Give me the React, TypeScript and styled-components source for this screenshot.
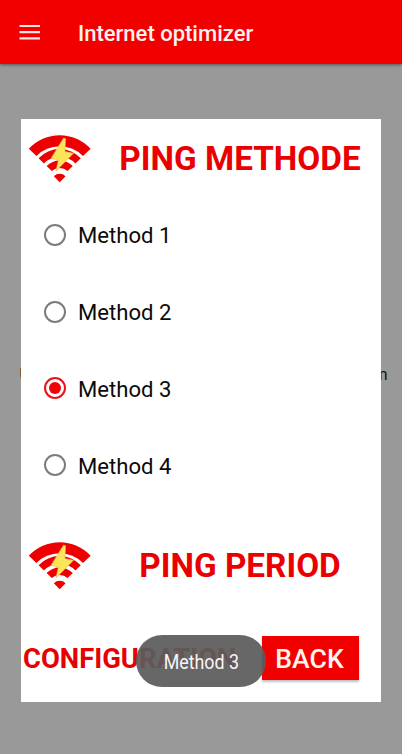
import React, { useState } from "react";
import styled, { createGlobalStyle } from "styled-components";

const GlobalStyle = createGlobalStyle`
  * { box-sizing: border-box; }
  body { margin: 0; font-family: Roboto, sans-serif; }
`;

const Screen = styled.div`
  position: relative;
  width: 402px;
  height: 754px;
  overflow: hidden;
  background: #999;
  display: flex;
  flex-direction: column;
`;

const AppBar = styled.header`
  height: 64px;
  flex: none;
  display: flex;
  align-items: center;
  gap: 37px;
  padding: 3px 0 0 19px;
  background: #f20000;
  box-shadow: 0 1px 3px rgba(0, 0, 0, 0.45);
`;

const MenuIcon = styled.svg`
  width: 22px;
  height: 16px;
  margin-top: -3px;
`;

const AppTitle = styled.h1`
  margin: 0;
  padding-top: 1px;
  color: #fff2ee;
  font-size: 22px;
  font-weight: 500;
  line-height: 28px;
  white-space: nowrap;
`;

const Content = styled.main`
  position: relative;
  flex: 1;
  padding: 55px 21px 0;
`;

const Behind = styled.div`
  position: absolute;
  top: 300px;
  left: 19.5px;
  right: 14.5px;
  display: flex;
  justify-content: space-between;
  color: #111;
  font-size: 16px;
  line-height: 21px;
`;

const Dialog = styled.section`
  position: relative;
  width: 360px;
  height: 583px;
  background: #fff;
  display: flex;
  flex-direction: column;
`;

const Heading = styled.div`
  display: flex;
  height: 78px;
  flex: none;
  padding: 15px 0 0 7px;
`;

const Logo = styled.svg`
  width: 63px;
  height: 49px;
  flex: none;
`;

const HeadingText = styled.h2`
  flex: 1;
  margin: 5px 0 0;
  padding-left: 8px;
  text-align: center;
  color: #ea0000;
  font-size: 33.3px;
  font-weight: 700;
  line-height: 40px;
  white-space: nowrap;
`;

const Options = styled.div`
  height: 329px;
  flex: none;
  display: flex;
  flex-direction: column;
`;

const Option = styled.button`
  display: flex;
  align-items: center;
  gap: 12px;
  height: 76.8px;
  padding: 0 0 0 23px;
  border: 0;
  background: none;
  font: 400 22.1px/30px Roboto, sans-serif;
  color: #0b0b0b;
  text-align: left;
`;

const Radio = styled.span<{ $checked: boolean }>`
  width: 22px;
  height: 22px;
  margin-top: -1px;
  border-radius: 50%;
  border: 2px solid ${(p) => (p.$checked ? "#ee1018" : "#7c7c7c")};
  display: grid;
  place-items: center;
  &::after {
    content: "";
    width: 12px;
    height: 12px;
    border-radius: 50%;
    background: ${(p) => (p.$checked ? "#f20006" : "transparent")};
  }
`;

const Footer = styled.footer`
  display: flex;
  align-items: center;
  justify-content: space-between;
  margin-top: 32px;
  padding: 0 22px 0 2px;
`;

const Configuration = styled.strong`
  padding-top: 3px;
  color: #e60000;
  font-size: 27.4px;
  font-weight: 700;
  line-height: 41px;
`;

const BackButton = styled.button`
  width: 97px;
  height: 44px;
  padding: 2px 2px 0 0;
  border: 0;
  background: #f20000;
  color: #fff4ef;
  font: 500 26.6px/40px Roboto, sans-serif;
  box-shadow: 0 2px 2px rgba(0, 0, 0, 0.25);
`;

const Toast = styled.div`
  position: absolute;
  left: 136px;
  top: 635px;
  width: 130px;
  height: 52px;
  border-radius: 26px;
  background: rgba(91, 91, 91, 0.93);
  color: #f6f6f6;
  display: grid;
  place-items: center;
  padding-top: 2px;
  font-size: 20.5px;
`;

const ToastText = styled.span`
  white-space: nowrap;
  transform: scaleX(0.87);
`;

const WifiBolt = () => (
  <Logo viewBox="0 0 63 49" aria-hidden="true">
    <g fill="#ee0000">
      <path d="M0.8 14.8 A42 42 0 0 1 62.6 14.8 L55 22 A33 33 0 0 0 8.4 22Z" />
      <path d="M10.6 24.2 A29 29 0 0 1 52.8 24.2 L47.4 29.4 A22 22 0 0 0 16 29.4Z" />
      <path d="M18.6 32 A18.5 18.5 0 0 1 44.8 32 L39.6 37 A12 12 0 0 0 23.8 37Z" />
      <path d="M25.8 42.2 A8.5 8.5 0 0 1 37.6 42.2 L31.7 48.2Z" />
    </g>
    <path
      d="M35.6 4 L23 24.4 L30.4 26 L28 37 L45.5 19.3 L37 17.6 L37.6 4.8Z"
      fill="#fbe65a"
      stroke="#ffb04b"
      strokeWidth="0.6"
    />
  </Logo>
);

const METHODS = ["Method 1", "Method 2", "Method 3", "Method 4"];

export default function App() {
  const [selected, setSelected] = useState("Method 3");
  return (
    <>
      <GlobalStyle />
      <Screen>
        <AppBar>
          <MenuIcon viewBox="0 0 22 16">
            <path d="M0.5 2H21M0.5 8.2H21M0.5 14.4H21" stroke="#ffe5e0" strokeWidth="2.2" />
          </MenuIcon>
          <AppTitle>Internet optimizer</AppTitle>
        </AppBar>
        <Content>
          <Behind>
            <span>U</span>
            <span>n</span>
          </Behind>
          <Dialog>
            <Heading>
              <WifiBolt />
              <HeadingText>PING METHODE</HeadingText>
            </Heading>
            <Options role="radiogroup">
              {METHODS.map((m) => (
                <Option key={m} role="radio" aria-checked={m === selected} onClick={() => setSelected(m)}>
                  <Radio $checked={m === selected} />
                  {m}
                </Option>
              ))}
            </Options>
            <Heading>
              <WifiBolt />
              <HeadingText>PING PERIOD</HeadingText>
            </Heading>
            <Footer>
              <Configuration>CONFIGURATION</Configuration>
              <BackButton>BACK</BackButton>
            </Footer>
          </Dialog>
        </Content>
        <Toast>
          <ToastText>{selected}</ToastText>
        </Toast>
      </Screen>
    </>
  );
}
